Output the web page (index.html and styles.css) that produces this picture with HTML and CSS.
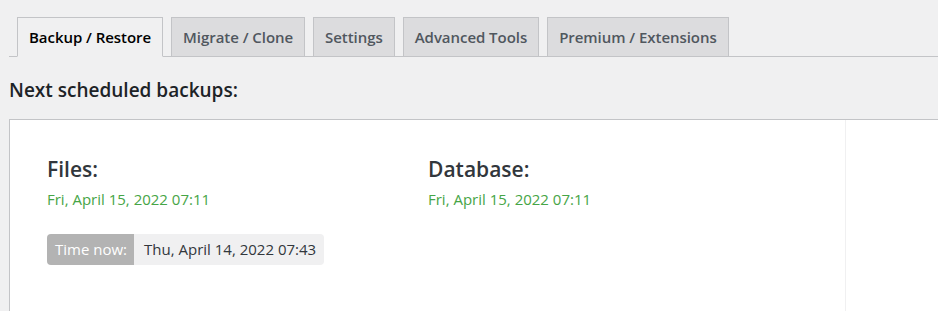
FILE: index.html
```html
<!DOCTYPE html>
<html>
<head>
<meta charset="utf-8">
<link rel="stylesheet" href="styles.css">
</head>
<body>
<div class="wrap">
  <nav class="tabs">
    <a class="tab active">Backup / Restore</a>
    <a class="tab">Migrate / Clone</a>
    <a class="tab">Settings</a>
    <a class="tab">Advanced Tools</a>
    <a class="tab">Premium / Extensions</a>
  </nav>
  <h2 class="title">Next scheduled backups:</h2>
  <div class="panel">
    <div class="schedule">
      <div class="col">
        <h3 class="label">Files:</h3>
        <div class="next">Fri, April 15, 2022 07:11</div>
        <div class="now">
          <span class="now-label">Time now:</span>
          <span class="now-value">Thu, April 14, 2022 07:43</span>
        </div>
      </div>
      <div class="col">
        <h3 class="label">Database:</h3>
        <div class="next">Fri, April 15, 2022 07:11</div>
      </div>
    </div>
    <div class="side"></div>
  </div>
</div>
</body>
</html>
```
FILE: styles.css
```css
html, body {
  margin: 0;
  padding: 0;
  background: #f0f0f1;
  overflow: hidden;
}
body {
  font-family: "Open Sans", "Noto Sans", sans-serif;
  color: #1d2327;
}
.wrap {
  padding-left: 9px;
  width: 1100px;
}
.tabs {
  display: flex;
  gap: 8px;
  padding: 17px 0 0 8px;
  border-bottom: 1px solid #c3c4c7;
  height: 39px;
  box-sizing: content-box;
}
.tab {
  display: flex;
  align-items: center;
  box-sizing: border-box;
  height: 40px;
  padding: 0 11px;
  margin-bottom: -1px;
  border: 1px solid #c3c4c7;
  background: #dcdcde;
  color: #50575e;
  font-size: 15px;
  font-weight: 600;
  letter-spacing: -0.05px;
}
.tab.active {
  background: #f0f0f1;
  border-bottom-color: #f0f0f1;
  color: #000;
}
.title {
  margin: 0;
  padding: 21px 0 17px;
  font-size: 19px;
  font-weight: 600;
  line-height: 24px;
  color: #1d2327;
}
.panel {
  display: flex;
  background: #fff;
  border: 1px solid #c3c4c7;
  height: 300px;
}
.schedule {
  display: flex;
  width: 798px;
  padding: 32px 0 0 37px;
  border-right: 1px solid #f0f0f1;
}
.col {
  width: 381px;
}
.label {
  margin: 0;
  font-size: 21px;
  font-weight: 600;
  line-height: 34px;
  color: #32373c;
}
.next {
  font-size: 15px;
  line-height: 26px;
  color: #46a546;
}
.now {
  display: inline-flex;
  margin-top: 22px;
  height: 31px;
  border-radius: 4px;
  overflow: hidden;
  font-size: 15px;
  line-height: 31px;
}
.now-label {
  background: #b3b3b3;
  color: #fff;
  padding: 0 7px 0 8px;
}
.now-value {
  background: #f0f0f1;
  color: #32373c;
  padding: 0 8px 0 10px;
}
```
